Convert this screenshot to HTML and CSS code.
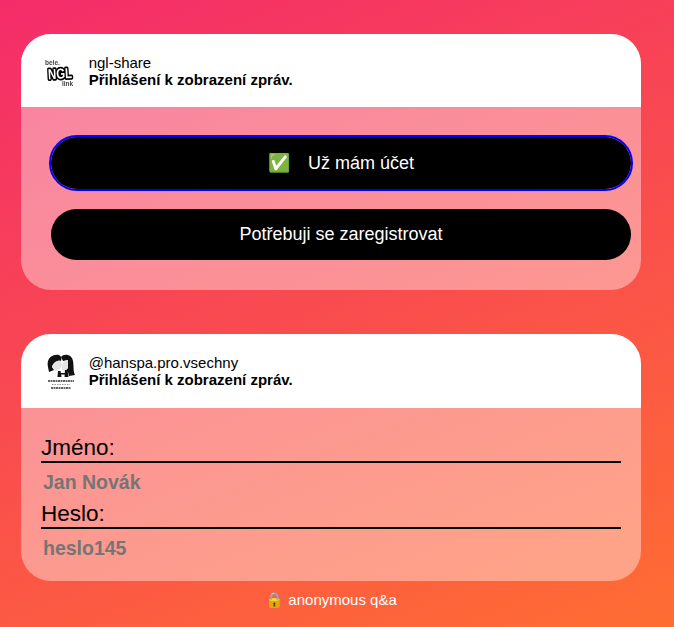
FILE: index.html
```html
<!DOCTYPE html>
<html lang="cs">
<head>
<meta charset="utf-8">
<title>ngl-share</title>
<link rel="stylesheet" href="styles.css">
</head>
<body>
<main class="page">
  <section class="card card-first">
    <header class="card-head">
      <svg class="avatar" viewBox="0 0 40 40" aria-hidden="true">
        <text x="4" y="13.500" class="logo-small">bele.</text>
        <text x="19" y="27" class="logo-ngl" text-anchor="middle" textLength="24" lengthAdjust="spacingAndGlyphs" transform="rotate(-3 19 22) translate(0 -4.800) scale(1 1.200)">NGL</text>
        <text x="21" y="35" class="logo-small">link</text>
      </svg>
      <div class="head-text">
        <div class="head-name">ngl-share</div>
        <div class="head-title">Přihlášení k zobrazení zpráv.</div>
      </div>
    </header>
    <div class="card-body actions">
      <button class="btn btn-focus" type="button"><span class="check">✅</span>Už mám účet</button>
      <button class="btn" type="button">Potřebuji se zaregistrovat</button>
    </div>
  </section>

  <section class="card card-second">
    <header class="card-head">
      <svg class="avatar" viewBox="0 0 40 40" aria-hidden="true">
        <path d="M7 16C5 7 12 3 18 4c2 1 3 3 2 6-4-1-8 2-9 6l2 3-5 2z" fill="#111"/>
        <path d="M20 6c3-4 11-3 12 4 1 6 0 10 2 14l-6 1-1-4-3-1 3-3V9l-5 1z" fill="#111"/>
        <path d="M11 16c1-4 5-7 9-6l1 4-2 4-4 2zM21 14l2-4 4-1v8l-3 3-3-1z" fill="#e4e4e4"/>
        <path d="M17 20h2.500l1 6h-4zM24 19h2.500l1 7h-4zM19 22h6v1.500h-6z" fill="#111"/>
        <path class="bar-line" d="M7 30h26" stroke-dasharray="2 0.500"/>
        <path class="bar-thin" d="M11 33.500h18" stroke-dasharray="1.500 1"/>
        <path class="bar-line" d="M10 37h20" stroke-dasharray="2 0.500"/>
      </svg>
      <div class="head-text">
        <div class="head-name">@hanspa.pro.vsechny</div>
        <div class="head-title">Přihlášení k zobrazení zpráv.</div>
      </div>
    </header>
    <form class="card-body login">
      <label class="field-label" for="jmeno">Jméno:</label>
      <input class="field-input" id="jmeno" type="text" placeholder="Jan Novák">
      <label class="field-label" for="heslo">Heslo:</label>
      <input class="field-input" id="heslo" type="text" placeholder="heslo145">
    </form>
  </section>

  <footer class="foot">🔒 anonymous q&amp;a</footer>
</main>
</body>
</html>
```

FILE: styles.css
```css
* { box-sizing: border-box; }
html, body { height: 100%; }
body {
  margin: 0;
  overflow: hidden;
  background: linear-gradient(158deg, #f42c6a, #ff6d32);
  font-family: "Liberation Sans", Arial, sans-serif;
  color: #000;
}
.page {
  width: 620px;
  margin-left: 21px;
  padding-top: 34px;
}
.card {
  border-radius: 30px;
  background: rgba(255, 255, 255, 0.4);
}
.card-second { margin-top: 44px; }
.card-head {
  display: flex;
  align-items: center;
  gap: 7.670px;
  background: #fff;
  border-radius: 30px 30px 0 0;
  padding: 0 20px;
}
.card-first .card-head { height: 73px; }
.card-second .card-head { height: 74px; }
.avatar {
  width: 40px;
  height: 40px;
  flex: none;
  filter: blur(0.300px);
}
.logo-small { font: bold 6.500px "Liberation Sans", sans-serif; fill: #444; }
.logo-ngl {
  font: bold 12px "Liberation Sans", sans-serif;
  fill: #fff;
  stroke: #000;
  stroke-width: 3px;
  stroke-linejoin: round;
  paint-order: stroke;
}
.bar-line { stroke: #333; stroke-width: 1.500px; fill: none; }
.bar-thin { stroke: #999; stroke-width: 1px; fill: none; }
.head-text { font-size: 15px; line-height: 17px; }
.head-title { font-weight: 700; }
.actions {
  display: flex;
  flex-direction: column;
  align-items: flex-start;
  gap: 20px;
  padding: 30px;
}
.btn {
  flex: none;
  width: 580px;
  height: 51px;
  border: 0;
  border-radius: 26px;
  background: #000;
  color: #fff;
  font: 18px "Liberation Sans", sans-serif;
  text-align: center;
}
.btn-focus {
  height: 52px;
  outline: 2px solid #0000ff;
}
.check { margin-right: 18px; }
.login {
  display: flex;
  flex-direction: column;
  padding: 27px 20px 14px;
}
.field-label {
  font-size: 22.500px;
  line-height: 26px;
  border-bottom: 2px solid #000;
}
.field-input {
  width: 100%;
  height: 38px;
  border: 0;
  padding: 0 2px;
  background: transparent;
  font: bold 19.500px "Liberation Sans", sans-serif;
  outline: 0;
}
.field-input::placeholder { color: #757575; opacity: 1; }
.foot {
  margin-top: 10px;
  text-align: center;
  color: #fff;
  font-size: 15px;
  line-height: 17px;
}
```
